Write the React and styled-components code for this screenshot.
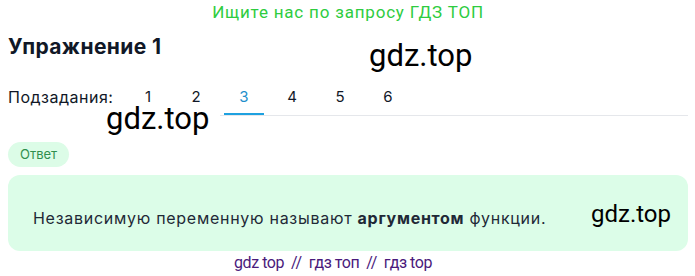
import styled, { createGlobalStyle } from 'styled-components';

const GlobalStyle = createGlobalStyle`
    body {
        margin: 0;
        background: #ffffff;
        font-family: Inter, 'Noto Sans', sans-serif;
    }
`;

const subtasks = [1, 2, 3, 4, 5, 6];
const active = 3;

const App = () => {
    return (
        <Page>
            <GlobalStyle />
            <Banner>Ищите нас по запросу ГДЗ ТОП</Banner>
            <Title>Упражнение 1</Title>
            <TabRow>
                <TabLabel>Подзадания:</TabLabel>
                <Tabs>
                    {subtasks.map((n) => (
                        <Tab key={n} $active={n === active} $lined={n >= active}>
                            {n}
                        </Tab>
                    ))}
                    <TabFill />
                </Tabs>
            </TabRow>
            <Badge>Ответ</Badge>
            <AnswerBox>
                Независимую переменную называют <b>аргументом</b> функции.
            </AnswerBox>
            <Footer>gdz top &nbsp;//&nbsp; гдз топ &nbsp;//&nbsp; гдз top</Footer>

            <Watermark $x={369} $y={37} $size={31}>gdz.top</Watermark>
            <Watermark $x={106} $y={100} $size={31}>gdz.top</Watermark>
            <Watermark $x={591} $y={200} $size={24}>gdz.top</Watermark>
        </Page>
    );
};

const Page = styled.div`
    position: relative;
    width: 695px;
    height: 276px;
    overflow: hidden;
    padding: 0 7px 0 8px;
    box-sizing: border-box;
    display: flex;
    flex-direction: column;
`;

const Banner = styled.div`
    height: 24px;
    line-height: 24px;
    text-align: center;
    color: #2ecc40;
    font-family: Roboto, 'Liberation Sans', sans-serif;
    font-size: 17px;
    letter-spacing: 0.8px;
`;

const Title = styled.h1`
    margin: 10px 0 0;
    height: 26px;
    line-height: 26px;
    font-size: 21px;
    font-weight: 700;
    color: #111827;
    letter-spacing: 0.4px;
`;

const TabRow = styled.div`
    margin-top: 22px;
    display: flex;
    align-items: stretch;
    height: 34px;
`;

const TabLabel = styled.div`
    width: 116px;
    line-height: 24px;
    padding-top: 3px;
    font-size: 16px;
    letter-spacing: 0.5px;
    color: #111827;
`;

const Tabs = styled.div`
    flex: 1;
    display: flex;
`;

const Tab = styled.div`
    position: relative;
    width: 48px;
    line-height: 24px;
    padding-top: 3px;
    text-align: center;
    font-size: 15px;
    color: ${({ $active }) => ($active ? '#1e8fcb' : '#111827')};
    border-bottom: 1px solid ${({ $lined }) => ($lined ? '#e5e7eb' : 'transparent')};

    &::after {
        content: '';
        display: ${({ $active }) => ($active ? 'block' : 'none')};
        position: absolute;
        left: 4px;
        right: 4px;
        bottom: 0;
        height: 2px;
        background: #1ea1e0;
    }
`;

const TabFill = styled.div`
    flex: 1;
    border-bottom: 1px solid #e5e7eb;
`;

const Badge = styled.div`
    margin-top: 26px;
    align-self: flex-start;
    height: 25px;
    line-height: 25px;
    padding: 0 12px;
    border-radius: 13px;
    background: #dcfce7;
    color: #2f8f4e;
    font-size: 13px;
`;

const AnswerBox = styled.div`
    margin-top: 8px;
    height: 77px;
    padding: 32px 25px 0;
    box-sizing: border-box;
    border-radius: 12px;
    background: #dcfde8;
    color: #1f2937;
    font-size: 16px;
    letter-spacing: 0.72px;
    line-height: 22px;

    b {
        font-weight: 700;
    }
`;

const Footer = styled.div`
    height: 25px;
    line-height: 24px;
    padding-right: 30px;
    text-align: center;
    color: #4a1a7c;
    font-family: Roboto, 'Liberation Sans', sans-serif;
    font-size: 16px;
    letter-spacing: -0.45px;
`;

const Watermark = styled.div`
    position: absolute;
    left: ${({ $x }) => $x}px;
    top: ${({ $y }) => $y}px;
    font-family: Roboto, 'Liberation Sans', sans-serif;
    font-size: ${({ $size }) => $size}px;
    line-height: 1.2;
    color: #000000;
    pointer-events: none;
`;

export default App;
